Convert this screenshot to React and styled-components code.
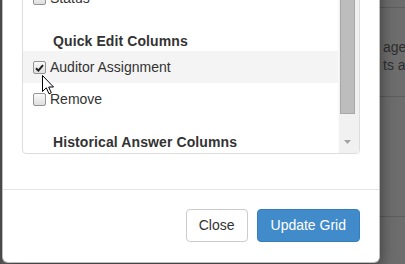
import React from "react";
import styled, { createGlobalStyle } from "styled-components";

const Global = createGlobalStyle`
  html, body { margin: 0; padding: 0; }
  body {
    background: #6c6c6c;
    overflow: hidden;
    font-family: "Liberation Sans", Arial, sans-serif;
    color: #333;
  }
`;

const Screen = styled.div`
  display: flex;
  width: 405px;
  height: 264px;
  overflow: hidden;
  position: relative;
`;

const Gutter = styled.div`
  width: 2px;
  flex: none;
  background: #5e5e5e;
`;

const Modal = styled.div`
  flex: none;
  width: 378px;
  margin-top: -40px;
  align-self: flex-start;
  box-sizing: border-box;
  background: #fff;
  border: 1px solid rgba(0, 0, 0, 0.25);
  border-radius: 6px;
  box-shadow: 0 5px 15px rgba(0, 0, 0, 0.5);
  position: relative;
  z-index: 1;
`;

const ModalBody = styled.div`
  padding: 20px 19px 20px 19px;
`;

const ListBox = styled.div`
  display: flex;
  height: 171px;
  border: 1px solid #dddddd;
  border-radius: 4px;
  overflow: hidden;
  margin-bottom: 15px;
`;

const ListContent = styled.div`
  flex: 1;
  min-width: 0;
  display: flex;
  flex-direction: column;
`;

const Row = styled.label`
  display: flex;
  align-items: center;
  gap: 4px;
  flex: none;
  height: 32px;
  padding-left: 10px;
  font-size: 14px;
  background: ${(p) => (p.$active ? "#f4f4f4" : "transparent")};
  color: #333;
`;

const Box = styled.span`
  flex: none;
  box-sizing: border-box;
  width: 13px;
  height: 13px;
  border: 1px solid #949494;
  border-radius: 2px;
  background: linear-gradient(#fafafa, #dedede);
  display: flex;
  align-items: center;
  justify-content: center;
  margin-top: 1px;
`;

const SectionHeader = styled.div`
  flex: none;
  height: 37px;
  box-sizing: border-box;
  padding: 18px 0 0 30px;
  line-height: 19px;
  font-size: 14px;
  font-weight: bold;
  letter-spacing: 0.1px;
  color: #333;
  white-space: nowrap;
`;

const ScrollTrack = styled.div`
  flex: none;
  width: 20px;
  background: #f1f1f1;
  display: flex;
  flex-direction: column;
  border-left: 1px solid #fafafa;
`;

const ArrowButton = styled.div`
  flex: none;
  height: ${(p) => p.$h}px;
  display: flex;
  justify-content: center;
  align-items: flex-start;
  padding-top: ${(p) => p.$pt}px;
  box-sizing: border-box;
  padding-right: 3px;
`;

const Thumb = styled.div`
  flex: none;
  height: 132px;
  width: 15px;
  box-sizing: border-box;
  background: #bdbdbd;
  border: 1px solid #a8a8a8;
  margin-left: 1px;
`;

const Spacer = styled.div`
  flex: 1;
`;

const Footer = styled.div`
  border-top: 1px solid #e5e5e5;
  padding: 19px 19px 20px;
  display: flex;
  justify-content: flex-end;
  gap: 9px;
`;

const Button = styled.button`
  font-family: "Liberation Sans", Arial, sans-serif;
  font-size: 14px;
  line-height: 19px;
  padding: 6px ${(p) => (p.$primary ? 13 : 12)}px;
  border-radius: 4px;
  cursor: pointer;
  border: 1px solid ${(p) => (p.$primary ? "#357ebd" : "#cccccc")};
  background: ${(p) => (p.$primary ? "#428bca" : "#ffffff")};
  color: ${(p) => (p.$primary ? "#ffffff" : "#333333")};
`;

const Aside = styled.div`
  flex: 1;
  min-width: 0;
  display: flex;
  flex-direction: column;
  overflow: hidden;
  background: #6d6d6d;
`;

const PageRule = styled.div`
  flex: none;
  height: ${(p) => p.$h}px;
  border-bottom: 1px solid #5d5d5d;
`;

const PageText = styled.div`
  padding: 30px 0 0 3px;
  font-size: 14px;
  line-height: 18px;
  color: #2f2f2f;
  white-space: nowrap;
  height: 89px;
  box-sizing: border-box;
  border-bottom: 1px solid #5d5d5d;
`;

const Cursor = styled.svg`
  position: absolute;
  left: 42px;
  top: 75px;
  z-index: 5;
`;

function Check({ checked }) {
  return (
    <Box>
      {checked && (
        <svg width="9" height="8" viewBox="0 0 9 8">
          <path d="M1 4.2 L3.4 6.6 L8 1.2" fill="none" stroke="#222" strokeWidth="2" />
        </svg>
      )}
    </Box>
  );
}

function Triangle() {
  return (
    <svg width="7" height="4" viewBox="0 0 7 4">
      <path d="M0 0 L7 0 L3.5 4 Z" fill="#a3a3a3" />
    </svg>
  );
}

export default function App() {
  return (
    <>
      <Global />
      <Screen>
        <Gutter />
        <Modal>
          <ModalBody>
            <ListBox>
              <ListContent>
                <Row>
                  <Check />
                  Status
                </Row>
                <SectionHeader>Quick Edit Columns</SectionHeader>
                <Row $active>
                  <Check checked />
                  Auditor Assignment
                </Row>
                <Row>
                  <Check />
                  Remove
                </Row>
                <SectionHeader>Historical Answer Columns</SectionHeader>
              </ListContent>
              <ScrollTrack>
                <Thumb />
                <Spacer />
                <ArrowButton $h={20} $pt={7}>
                  <Triangle />
                </ArrowButton>
              </ScrollTrack>
            </ListBox>
          </ModalBody>
          <Footer>
            <Button>Close</Button>
            <Button $primary>Update Grid</Button>
          </Footer>
        </Modal>
        <Aside>
          <PageRule $h={7} />
          <PageText>
            <div>age</div>
            <div>ts a</div>
          </PageText>
          <PageRule $h={119} />
        </Aside>
        <Cursor width="13" height="20" viewBox="0 0 13 20">
          <path
            d="M0.5 0.5 L0.5 16.5 L4.3 12.8 L7 18.8 L9.3 17.8 L6.7 12 L11.5 12 Z"
            fill="#fff"
            stroke="#000"
            strokeWidth="1"
            strokeLinejoin="miter"
          />
        </Cursor>
      </Screen>
    </>
  );
}
